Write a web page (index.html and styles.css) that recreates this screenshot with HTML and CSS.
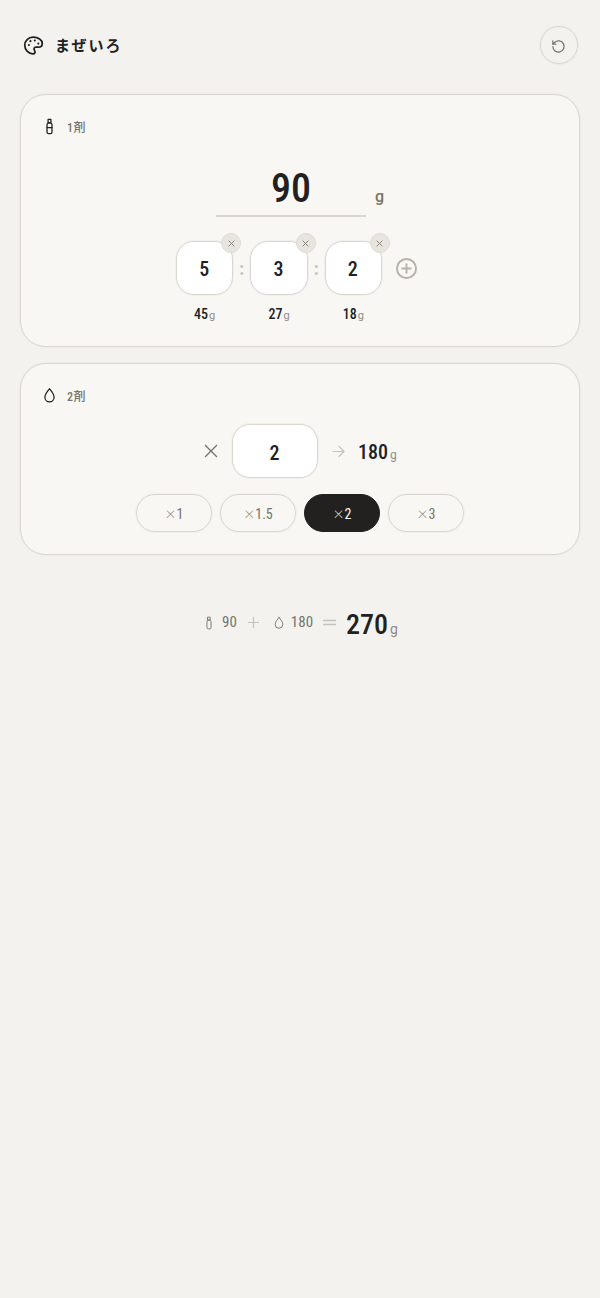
FILE: index.html
```html
<!DOCTYPE html>
<html lang="ja">
<head>
    <meta charset="UTF-8">
    <title>まぜいろ</title>
    <link rel="stylesheet" href="styles.css">
</head>
<body>
    <div class="header">
        <div class="brand">
            <svg class="palette" viewBox="0 0 24 24"><path d="M11.500 2.500C6 2.500 2 6.500 2 11.800c0 5 4 9.700 9.200 9.700 1.500 0 2.500-1 2.500-2.200 0-.7-.3-1.200-.6-1.700-.3-.5-.5-1-.5-1.500 0-1.300 1-2.200 2.300-2.200h2.500c3 0 4.600-1.900 4.600-4.300 0-4.200-4.500-7.100-10.500-7.100z"/><circle class="dot" cx="6.800" cy="11.500" r="1.200"/><circle class="dot" cx="8.500" cy="7" r="1.200"/><circle class="dot" cx="13.500" cy="6.300" r="1.200"/><circle class="dot" cx="17.500" cy="9.800" r="1.200"/></svg>
            <span class="title">まぜいろ</span>
        </div>
        <button class="reset">
            <svg viewBox="0 0 24 24"><path d="M3 12a9 9 0 1 0 3-6.700L3 8"/><path d="M3 3v5h5"/></svg>
        </button>
    </div>

    <div class="card card-one">
        <div class="label">
            <svg class="label-icon" viewBox="0 0 24 24"><path d="M10 2h4v5h-4z"/><path d="M8.500 9.500c0-1.500 1.500-2.500 1.500-2.500h4s1.500 1 1.500 2.500V20a2 2 0 0 1-2 2h-3a2 2 0 0 1-2-2z"/><path d="M8.500 13.500h7"/></svg>
            <span>1剤</span>
        </div>
        <div class="amount">
            <div class="amount-value">90</div>
            <span class="amount-unit">g</span>
        </div>
        <div class="ratios">
            <div class="ratio">
                <div class="ratio-box">
                    <span class="digit">5</span>
                    <span class="remove"><svg viewBox="0 0 8 8"><path d="M1 1l6 6M7 1L1 7"/></svg></span>
                </div>
                <div class="ratio-g">45<small>g</small></div>
            </div>
            <span class="colon">:</span>
            <div class="ratio">
                <div class="ratio-box">
                    <span class="digit">3</span>
                    <span class="remove"><svg viewBox="0 0 8 8"><path d="M1 1l6 6M7 1L1 7"/></svg></span>
                </div>
                <div class="ratio-g">27<small>g</small></div>
            </div>
            <span class="colon">:</span>
            <div class="ratio">
                <div class="ratio-box">
                    <span class="digit">2</span>
                    <span class="remove"><svg viewBox="0 0 8 8"><path d="M1 1l6 6M7 1L1 7"/></svg></span>
                </div>
                <div class="ratio-g">18<small>g</small></div>
            </div>
            <svg class="add" viewBox="0 0 22 22"><circle cx="11" cy="11" r="10"/><path d="M11 6.500v9M6.500 11h9"/></svg>
        </div>
    </div>

    <div class="card card-two">
        <div class="label">
            <svg class="label-icon" viewBox="0 0 24 24"><path d="M12 2.500c3 4 6.500 7.500 6.500 12a6.500 6.500 0 0 1-13 0c0-4.500 3.500-8 6.500-12z"/></svg>
            <span>2剤</span>
        </div>
        <div class="multi">
            <svg class="times" viewBox="0 0 14 14"><path d="M1.500 1.500l11 11M12.500 1.500l-11 11"/></svg>
            <div class="multi-box"><span class="digit-low">2</span></div>
            <svg class="arrow" viewBox="0 0 14 14"><path d="M1 7h12M7.500 1.500L13 7l-5.500 5.500"/></svg>
            <div class="multi-result">180<small>g</small></div>
        </div>
        <div class="presets">
            <button class="preset"><span class="x">×</span>1</button>
            <button class="preset"><span class="x">×</span>1.5</button>
            <button class="preset active"><span class="x">×</span>2</button>
            <button class="preset"><span class="x">×</span>3</button>
        </div>
    </div>

    <div class="total">
        <svg class="total-icon" viewBox="0 0 24 24"><path d="M10 2h4v5h-4z"/><path d="M8.500 9.500c0-1.500 1.500-2.500 1.500-2.500h4s1.500 1 1.500 2.500V20a2 2 0 0 1-2 2h-3a2 2 0 0 1-2-2z"/></svg>
        <span class="total-num">90</span>
        <svg class="op-plus" viewBox="0 0 11 11"><path d="M5.500 .5v10M.5 5.500h10"/></svg>
        <svg class="total-icon drop" viewBox="0 0 24 24"><path d="M12 2.500c3 4 6.500 7.500 6.500 12a6.500 6.500 0 0 1-13 0c0-4.500 3.500-8 6.500-12z"/></svg>
        <span class="total-num">180</span>
        <svg class="op-equal" viewBox="0 0 13 7"><path d="M.5 1.500h12M.5 5.500h12"/></svg>
        <span class="total-sum">270<small>g</small></span>
    </div>
</body>
</html>
```

FILE: styles.css
```css
* {
    margin: 0;
    padding: 0;
    box-sizing: border-box;
}

body {
    background-color: #f3f2ee;
    font-family: "Roboto", "Noto Sans CJK JP", sans-serif;
    font-stretch: 75%;
    color: #22211f;
    padding: 26px 20px 0;
}

svg {
    fill: none;
    stroke: currentColor;
    stroke-linecap: round;
    stroke-linejoin: round;
    display: block;
}

small {
    font-weight: 400;
    font-stretch: 90%;
    color: #8f8c86;
}

.header {
    display: flex;
    justify-content: space-between;
    align-items: center;
    padding: 0 2px 0 3px;
    margin-bottom: 30px;
}

.brand {
    display: flex;
    align-items: center;
    gap: 11px;
}

.palette {
    width: 21px;
    height: 21px;
    stroke-width: 2;
}

.palette .dot {
    fill: currentColor;
    stroke: none;
}

.title {
    font-size: 15px;
    font-weight: 700;
    letter-spacing: 2px;
    font-family: "Noto Sans CJK JP", sans-serif;
    margin-top: -2px;
}

.reset {
    width: 38px;
    height: 38px;
    border-radius: 50%;
    border: 1px solid #dad7d0;
    box-shadow: 0 0 0 1px rgba(218, 215, 208, 0.2);
    background: transparent;
    color: #77746e;
    display: flex;
    align-items: center;
    justify-content: center;
}

.reset svg {
    width: 15px;
    height: 15px;
    stroke-width: 2;
    margin: 3px 1px 0 0;
}

.card {
    background-color: #f8f7f3;
    border: 1px solid #dad7d0;
    box-shadow: 0 0 0 1px rgba(218, 215, 208, 0.2);
    border-radius: 26px;
    margin-bottom: 16px;
}

.card-one {
    height: 253px;
    padding: 21px 20px 0;
}

.card-two {
    height: 192px;
    padding: 21px 20px 0;
}

.label {
    display: flex;
    align-items: center;
    gap: 9px;
    font-size: 12px;
    font-weight: 500;
    letter-spacing: 0.500px;
    color: #77746e;
    height: 20px;
}

.label-icon {
    width: 17px;
    height: 17px;
    color: #22211f;
    stroke-width: 1.800;
}

.amount {
    display: flex;
    justify-content: center;
    margin-top: 21px;
    position: relative;
    width: 150px;
    margin-left: 175px;
    height: 60px;
    border-bottom: 2px solid #dad7d0;
}

.amount-value {
    width: 150px;
    text-align: center;
    font-size: 40px;
    font-weight: 500;
    line-height: 50px;
    padding-top: 7px;
}

.amount-unit {
    position: absolute;
    left: 159px;
    top: 30px;
    font-size: 16px;
    font-weight: 500;
    font-stretch: 90%;
    color: #77746e;
}

.ratios {
    display: flex;
    align-items: flex-start;
    margin-top: 24px;
    margin-left: 135px;
}

.ratio {
    width: 57.330px;
}

.ratio-box {
    width: 57.330px;
    height: 54px;
    background: #fff;
    border: 1px solid #dad7d0;
    box-shadow: 0 0 0 1px rgba(218, 215, 208, 0.2);
    border-radius: 18px;
    font-size: 20px;
    font-weight: 500;
    font-stretch: 85%;
    display: flex;
    align-items: center;
    justify-content: center;
    position: relative;
}

.digit {
    padding: 2px 1px 0 0;
}

.digit-low {
    padding: 4px 1px 0 0;
}

.remove {
    position: absolute;
    top: -9px;
    right: -9px;
    width: 20px;
    height: 20px;
    border-radius: 50%;
    background: #e8e5df;
    border: 1px solid #dedbd4;
    color: #85827c;
    display: flex;
    align-items: center;
    justify-content: center;
}

.remove svg {
    width: 7px;
    height: 7px;
    stroke-width: 1.100;
}

.ratio-g {
    margin-top: 10px;
    text-align: center;
    font-size: 14px;
    font-weight: 500;
    font-stretch: 80%;
    line-height: 18px;
}

.ratio-g small {
    font-size: 11px;
    margin-left: 1px;
}

.colon {
    width: 17px;
    height: 54px;
    line-height: 56px;
    text-align: center;
    color: #c4c1ba;
    font-size: 18px;
    font-weight: 700;
}

.add {
    width: 21px;
    height: 21px;
    margin: 17px 0 0 14px;
    color: #b5b2ab;
    stroke-width: 2;
}

.multi {
    display: flex;
    align-items: center;
    margin-top: 19px;
    margin-left: 163px;
}

.times {
    width: 14px;
    height: 14px;
    color: #77746e;
    stroke-width: 1.400;
}

.multi-box {
    width: 86px;
    height: 54px;
    margin-left: 14px;
    background: #fff;
    border: 1px solid #dad7d0;
    box-shadow: 0 0 0 1px rgba(218, 215, 208, 0.2);
    border-radius: 18px;
    font-size: 20px;
    font-weight: 500;
    font-stretch: 85%;
    display: flex;
    align-items: center;
    justify-content: center;
}

.arrow {
    width: 13px;
    height: 13px;
    margin-left: 14px;
    color: #c4c1ba;
    stroke-width: 1.300;
}

.multi-result {
    margin-left: 13px;
    font-size: 20px;
    font-weight: 500;
    padding-top: 2px;
}

.multi-result small {
    font-size: 12px;
    margin-left: 2px;
}

.presets {
    display: flex;
    justify-content: center;
    gap: 8px;
    margin-top: 16px;
}

.preset {
    width: 76px;
    height: 38px;
    border-radius: 19px;
    border: 1px solid #dad7d0;
    box-shadow: 0 0 0 1px rgba(218, 215, 208, 0.2);
    background: transparent;
    color: #77746e;
    font-family: inherit;
    font-stretch: 85%;
    font-size: 14px;
}

.preset .x {
    font-family: "Noto Sans CJK JP", sans-serif;
    font-size: 12px;
    font-weight: 300;
}

.preset.active {
    background: #22211f;
    border-color: #22211f;
    box-shadow: none;
    color: #f8f7f3;
}

.total {
    display: flex;
    justify-content: center;
    align-items: center;
    margin-top: 48px;
    height: 42px;
    color: #77746e;
}

.total-icon {
    width: 14px;
    height: 14px;
    stroke-width: 1.600;
    margin: -3px 6px 0 0;
}

.total-icon.drop {
    margin-right: 5px;
}

.total-num {
    font-size: 15px;
    font-weight: 450;
    font-stretch: 78%;
    margin-top: -4px;
}

.op-plus {
    width: 11px;
    height: 11px;
    color: #c4c1ba;
    stroke-width: 1.200;
    margin: -4px 13px 0 11px;
}

.op-equal {
    width: 13px;
    height: 7px;
    color: #c4c1ba;
    stroke-width: 1.300;
    margin: -4px 10px 0 10px;
}

.total-sum {
    font-size: 28px;
    font-weight: 500;
    color: #22211f;
}

.total-sum small {
    font-size: 14px;
    margin-left: 2px;
}
```
